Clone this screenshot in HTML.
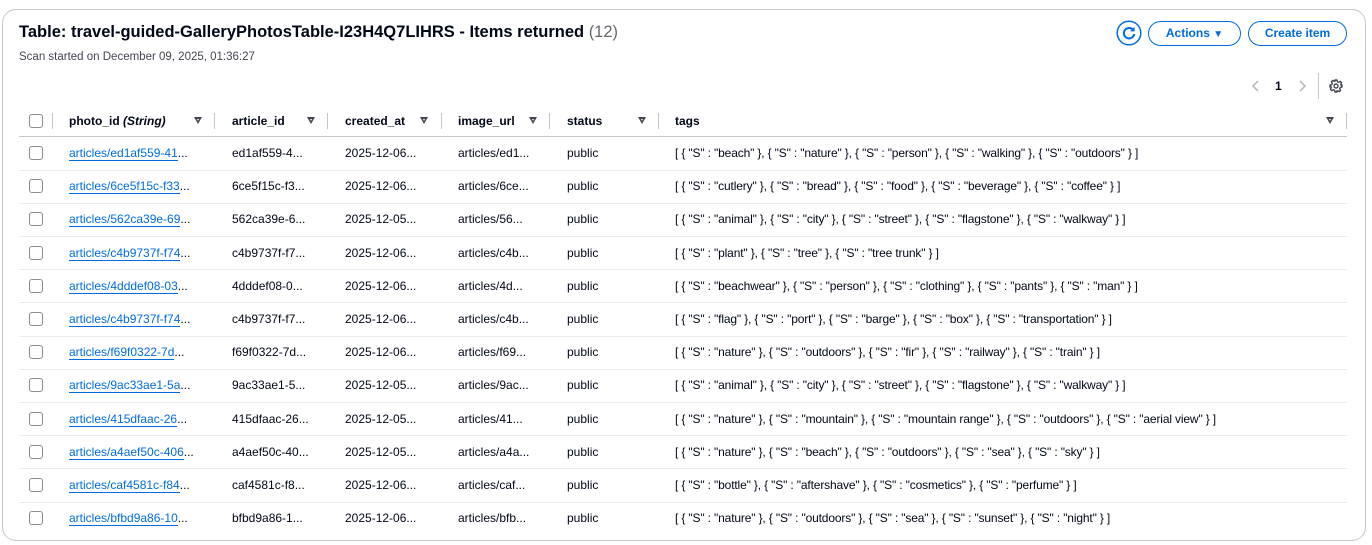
<!DOCTYPE html>
<html><head><meta charset="utf-8"><style>
*{box-sizing:border-box;margin:0;padding:0}
body{width:1372px;height:545px;background:#fff;font-family:"Liberation Sans",Arial,sans-serif;color:#000716;position:relative;overflow:hidden}
.card{position:absolute;left:2px;top:9px;width:1364px;height:532px;border:1px solid #c6c6cd;border-radius:14px;background:#fff}
.a{position:absolute;white-space:nowrap}
h1{position:absolute;left:19px;top:23px;font-size:16.5px;font-weight:bold;white-space:nowrap;letter-spacing:0px}
h1 span{font-weight:normal;color:#656871}
.sub{left:19px;top:51px;font-size:11.5px;color:#424650}
.btn{position:absolute;top:21px;height:25px;border:1.5px solid #006ce0;border-radius:13px;color:#006ce0;font-weight:bold;font-size:12px;line-height:22px;text-align:center}
.hd{font-size:12px;font-weight:bold;top:114px}
.cb{position:absolute;left:29px;width:14px;height:14px;border:1.5px solid #8c8c94;border-radius:3px;background:#fff}
.dv{position:absolute;top:113px;width:1px;height:16px;background:#c6c6cd}
.tri{position:absolute;top:117px;width:0;height:0;border-left:4.5px solid transparent;border-right:4.5px solid transparent;border-top:7px solid #424650}
.tri:after{content:"";position:absolute;left:-1.5px;top:-5.5px;border-left:1.5px solid transparent;border-right:1.5px solid transparent;border-top:2.5px solid #fff}
.ln{position:absolute;left:19px;width:1328px;height:1px;background:#ebebf0}
.c{position:absolute;font-size:12px;white-space:nowrap}
.tg{letter-spacing:-0.15px}
.lk{color:#006ce0;border-bottom:1px solid #006ce0;padding-bottom:0}
</style></head><body>
<div class="card"></div>
<h1>Table: travel-guided-GalleryPhotosTable-I23H4Q7LIHRS - Items returned <span>(12)</span></h1>
<div class="a sub">Scan started on December 09, 2025, 01:36:27</div>
<svg class="a" style="left:1116px;top:20px" width="26" height="26" viewBox="0 0 26 26"><circle cx="13" cy="13" r="11.8" fill="none" stroke="#006ce0" stroke-width="1.5"/><path d="M17.5 10.5A5.2 5.2 0 1 0 18.2 14" fill="none" stroke="#006ce0" stroke-width="2"/><path d="M18.6 6.8v4.6h-4.6z" fill="#006ce0"/></svg>
<div class="btn" style="left:1148px;width:93px">Actions <span style="font-size:10px">&#9660;</span></div>
<div class="btn" style="left:1248px;width:99px">Create item</div>
<svg class="a" style="left:1251px;top:79px" width="10" height="14"><path d="M7 2L2 7l5 5" fill="none" stroke="#b4b4bb" stroke-width="1.5"/></svg>
<div class="a" style="left:1275px;top:79px;font-size:12px;font-weight:bold">1</div>
<svg class="a" style="left:1297px;top:79px" width="10" height="14"><path d="M3 2l5 5-5 5" fill="none" stroke="#b4b4bb" stroke-width="1.5"/></svg>
<div class="a" style="left:1318px;top:73px;width:1px;height:26px;background:#c6c6cd"></div>
<svg class="a" style="left:1329px;top:79px" width="14" height="14" viewBox="0 0 14 14"><path d="M6 1h2l.4 1.7 1.3.6 1.5-.9 1.4 1.4-.9 1.5.6 1.3L13 6v2l-1.7.4-.6 1.3.9 1.5-1.4 1.4-1.5-.9-1.3.6L8 13H6l-.4-1.7-1.3-.6-1.5.9-1.4-1.4.9-1.5-.6-1.3L1 8V6l1.7-.4.6-1.3-.9-1.5 1.4-1.4 1.5.9 1.3-.6z" fill="none" stroke="#424650" stroke-width="1.4" stroke-linejoin="round"/><circle cx="7" cy="7" r="2" fill="none" stroke="#424650" stroke-width="1.4"/></svg>
<div class="cb" style="top:114px"></div>
<div class="dv" style="left:52px"></div>
<div class="a hd" style="left:69px">photo_id <i>(String)</i></div><div class="tri" style="left:194px"></div><div class="dv" style="left:214px"></div>
<div class="a hd" style="left:232px">article_id</div><div class="tri" style="left:307px"></div><div class="dv" style="left:327px"></div>
<div class="a hd" style="left:345px">created_at</div><div class="tri" style="left:420px"></div><div class="dv" style="left:441px"></div>
<div class="a hd" style="left:458px">image_url</div><div class="tri" style="left:529px"></div><div class="dv" style="left:549px"></div>
<div class="a hd" style="left:567px">status</div><div class="tri" style="left:638px"></div><div class="dv" style="left:658px"></div>
<div class="a hd" style="left:675px">tags</div><div class="tri" style="left:1326px"></div><div class="dv" style="left:1346px"></div>
<div class="ln" style="top:136px;background:#c6c6cd"></div>
<div id="rows"></div>
<script>
var d=[["ed1af559-41","ed1af559-4","2025-12-06","ed1",'"beach" }, { "S" : "nature" }, { "S" : "person" }, { "S" : "walking" }, { "S" : "outdoors"'],
["6ce5f15c-f33","6ce5f15c-f3","2025-12-06","6ce",'"cutlery" }, { "S" : "bread" }, { "S" : "food" }, { "S" : "beverage" }, { "S" : "coffee"'],
["562ca39e-69","562ca39e-6","2025-12-05","56",'"animal" }, { "S" : "city" }, { "S" : "street" }, { "S" : "flagstone" }, { "S" : "walkway"'],
["c4b9737f-f74","c4b9737f-f7","2025-12-06","c4b",'"plant" }, { "S" : "tree" }, { "S" : "tree trunk"'],
["4dddef08-03","4dddef08-0","2025-12-06","4d",'"beachwear" }, { "S" : "person" }, { "S" : "clothing" }, { "S" : "pants" }, { "S" : "man"'],
["c4b9737f-f74","c4b9737f-f7","2025-12-06","c4b",'"flag" }, { "S" : "port" }, { "S" : "barge" }, { "S" : "box" }, { "S" : "transportation"'],
["f69f0322-7d","f69f0322-7d","2025-12-06","f69",'"nature" }, { "S" : "outdoors" }, { "S" : "fir" }, { "S" : "railway" }, { "S" : "train"'],
["9ac33ae1-5a","9ac33ae1-5","2025-12-05","9ac",'"animal" }, { "S" : "city" }, { "S" : "street" }, { "S" : "flagstone" }, { "S" : "walkway"'],
["415dfaac-26","415dfaac-26","2025-12-05","41",'"nature" }, { "S" : "mountain" }, { "S" : "mountain range" }, { "S" : "outdoors" }, { "S" : "aerial view"'],
["a4aef50c-406","a4aef50c-40","2025-12-05","a4a",'"nature" }, { "S" : "beach" }, { "S" : "outdoors" }, { "S" : "sea" }, { "S" : "sky"'],
["caf4581c-f84","caf4581c-f8","2025-12-06","caf",'"bottle" }, { "S" : "aftershave" }, { "S" : "cosmetics" }, { "S" : "perfume"'],
["bfbd9a86-10","bfbd9a86-1","2025-12-06","bfb",'"nature" }, { "S" : "outdoors" }, { "S" : "sea" }, { "S" : "sunset" }, { "S" : "night"']];
var h="";
d.forEach(function(r,i){var y=153+i*33.2;var t=Math.round(y-7);
h+='<div class="cb" style="top:'+(Math.round(y)-7)+'px"></div>';
h+='<div class="c" style="left:69px;top:'+t+'px"><span class="lk">articles/'+r[0]+'</span>...</div>';
h+='<div class="c" style="left:232px;top:'+t+'px">'+r[1]+'...</div>';
h+='<div class="c" style="left:345px;top:'+t+'px">'+r[2]+'...</div>';
h+='<div class="c" style="left:458px;top:'+t+'px">articles/'+r[3]+'...</div>';
h+='<div class="c" style="left:567px;top:'+t+'px">public</div>';
h+='<div class="c tg" style="left:675px;top:'+t+'px">[ { "S" : '+r[4]+' } ]</div>';
if(i<11)h+='<div class="ln" style="top:'+Math.round(y+16.5)+'px"></div>';});
document.getElementById("rows").innerHTML=h;
</script>
</body></html>
